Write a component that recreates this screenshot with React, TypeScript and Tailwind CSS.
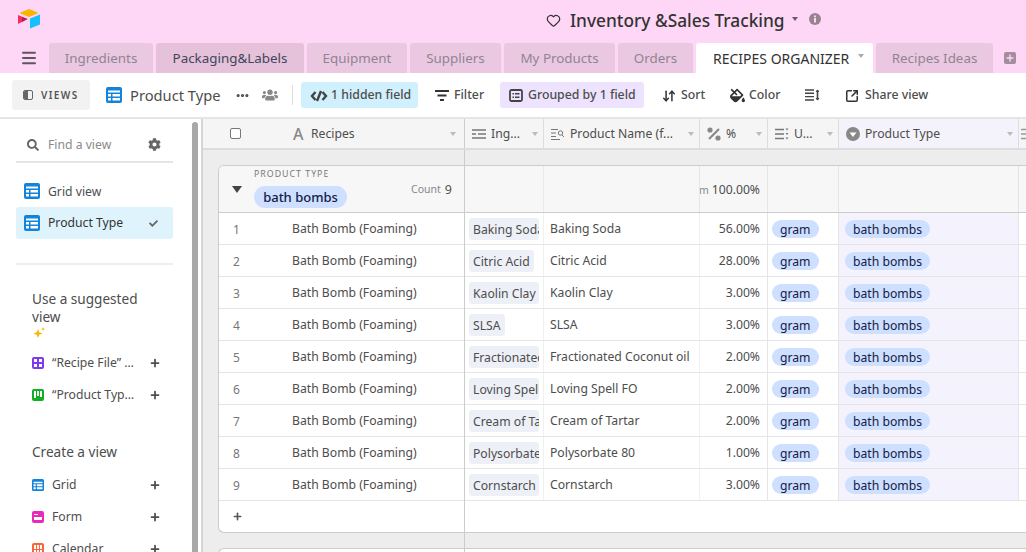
import { Ellipsis, Menu, Plus, ArrowDownUp, SquareArrowOutUpRight, Heart } from 'lucide-react';
import { FaCheck, FaCog, FaFillDrip, FaSearch, FaUsers } from 'react-icons/fa';

const font = "font-['Noto_Sans',sans-serif]";

const rows = [
   ['Baking Soda', 'Baking Soda', '56.00%'],
   ['Citric Acid', 'Citric Acid', '28.00%'],
   ['Kaolin Clay', 'Kaolin Clay', '3.00%'],
   ['SLSA', 'SLSA', '3.00%'],
   ['Fractionated Coconut oil', 'Fractionated Coconut oil', '2.00%'],
   ['Loving Spell FO', 'Loving Spell FO', '2.00%'],
   ['Cream of Tartar', 'Cream of Tartar', '2.00%'],
   ['Polysorbate 80', 'Polysorbate 80', '1.00%'],
   ['Cornstarch', 'Cornstarch', '3.00%'],
];

function Logo() {
   return (
      <svg width="24" height="22" viewBox="0 0 24 22">
         <path d="M12 1 L3.5 4.5 Q2.8 5 3.5 5.5 L12 9 L20.5 5.5 Q21.2 5 20.5 4.5 Z" fill="#fcb400" />
         <path d="M13 10.5 L23 6.5 V16.500 L13 20.500 Z" fill="#18bfff" />
         <path d="M1 7 L10.5 11 L1 16 Z" fill="#f82b60" />
         <path d="M5 9 L10.5 11 L5 14 Z" fill="#b5224f" />
      </svg>
   );
}

function TableIcon({ size = 16, color = '#1283da' }: { size?: number; color?: string }) {
   return (
      <svg width={size} height={size} viewBox="0 0 16 16" className="shrink-0">
         <rect width="16" height="16" rx="2" fill={color} />
         <path d="M2 3.500h12v2H2zM2 7h3v2.500H2zM6.500 7H14v2.500H6.500zM2 11h3v2.500H2zM6.500 11H14v2.500H6.500z" fill="#fff" />
      </svg>
   );
}

function Tab({ label, w, dark }: { label: string; w: string; dark?: boolean }) {
   return (
      <div className={`${w} flex h-[30px] items-center justify-center rounded-t-[3px] text-[13.4px] ${dark ? 'bg-[#e5c1da] text-[#41465a]' : 'bg-[#ebc8e1] text-[#8f8592]'}`}>
         {label}
      </div>
   );
}

function Header() {
   return (
      <div className="h-[73px] shrink-0 bg-[#fdd7f5]">
         <div className="relative h-[43px]">
            <div className="absolute left-[17px] top-[8px]"><Logo /></div>
            <div className="flex h-[41px] items-center pl-[546px]">
               <Heart size={15} strokeWidth={2} className="text-[#333]" />
               <span className="ml-[9px] text-[17.3px] font-medium text-[#333]">Inventory &amp;Sales Tracking</span>
               <span className="ml-[7px] mb-[4px] border-x-[3.5px] border-t-[4px] border-x-transparent border-t-[#665a63]" />
               <svg width="12" height="12" viewBox="0 0 12 12" className="ml-[11px] mb-[3px]">
                  <circle cx="6" cy="6" r="6" fill="#97848f" />
                  <rect x="5" y="5" width="2" height="4.500" fill="#fdd7f5" />
                  <rect x="5" y="2.500" width="2" height="1.700" fill="#fdd7f5" />
               </svg>
            </div>
         </div>
         <div className="flex h-[30px] items-end">
            <div className="flex h-[30px] w-[49px] items-center pl-[20px]">
               <Menu size={18} strokeWidth={2.6} className="text-[#5e5660]" />
            </div>
            <div className="flex gap-[3px]">
               <Tab label="Ingredients" w="w-[104px]" />
               <Tab label="Packaging&Labels" w="w-[148px]" dark />
               <Tab label="Equipment" w="w-[100px]" />
               <Tab label="Suppliers" w="w-[91px]" />
               <Tab label="My Products" w="w-[111px]" />
               <Tab label="Orders" w="w-[75px]" />
               <div className="flex h-[30px] w-[177px] items-center rounded-t-[3px] bg-white pl-[17px] text-[14px] text-[#333]">
                  <span>RECIPES ORGANIZER</span>
                  <span className="ml-[9px] mb-[4px] border-x-[3.5px] border-t-[4px] border-x-transparent border-t-[#aaa]" />
               </div>
               <Tab label="Recipes Ideas" w="w-[117px]" />
            </div>
            <div className="ml-[11px] flex h-[30px] items-center">
               <span className="flex h-[12px] w-[12px] items-center justify-center rounded-[2px] bg-[#a38c9d]">
                  <Plus size={10} strokeWidth={3.5} className="text-[#fdd7f5]" />
               </span>
            </div>
         </div>
      </div>
   );
}

function ToolBtn({ icon, label, className = '' }: { icon: React.ReactNode; label: string; className?: string }) {
   return (
      <div className={`flex h-[26px] shrink-0 items-center gap-[5px] whitespace-nowrap rounded-[3px] pt-[1px] text-[12.3px] font-medium text-[#4d4d4d] ${className}`}>
         {icon}
         <span>{label}</span>
      </div>
   );
}

function Toolbar() {
   return (
      <div className="flex h-[46px] shrink-0 items-center border-b-2 border-[#e5e5e5] bg-white pl-[12px]">
         <div className="flex h-[30px] w-[78px] items-center rounded-[3px] bg-[#f2f2f2] pl-[11px]">
            <span className="flex h-[10px] w-[10px] overflow-hidden rounded-[2px] border border-[#666]">
               <span className="w-[4px] bg-[#666]" />
            </span>
            <span className="ml-[8px] text-[10px] font-semibold tracking-[1.4px] text-[#555]">VIEWS</span>
         </div>
         <div className="ml-[16px]"><TableIcon /></div>
         <span className="ml-[8px] w-[90px] whitespace-nowrap text-[14.7px] text-[#4d4d4d]">Product Type</span>
         <Ellipsis size={15} strokeWidth={3} className="ml-[15px] text-[#444]" />
         <FaUsers size={16} className="ml-[12px] text-[#888]" />
         <span className="ml-[14px] h-[20px] w-px bg-[#ddd]" />
         <ToolBtn
            className="ml-[8px] w-[117px] bg-[#d0f0fd] pl-[9px] !gap-[3px]"
            icon={
               <svg width="18" height="12" viewBox="0 0 18 12">
                  <path d="M5.500 2 L2 6 L5.500 10 M12.500 2 L16 6 L12.500 10 M11 1 L7 11" fill="none" stroke="#444" strokeWidth="2.400" />
               </svg>
            }
            label="1 hidden field"
         />
         <ToolBtn
            className="ml-[17px] w-[49px]"
            icon={<svg width="14" height="11" viewBox="0 0 14 11" className="shrink-0"><path d="M0 1h14M2.500 5.500h9M5 10h4" stroke="#333" strokeWidth="2" /></svg>}
            label="Filter"
         />
         <ToolBtn
            className="ml-[16px] w-[144px] bg-[#ede3fe] pl-[9px]"
            icon={
               <svg width="14" height="13" viewBox="0 0 14 13" className="shrink-0">
                  <rect x="1" y="1" width="12" height="11" rx="1.500" fill="none" stroke="#444" strokeWidth="1.800" />
                  <path d="M3.500 4.800h1.500M6 4.800h4.500M3.500 8.200h1.500M6 8.200h4.500" stroke="#444" strokeWidth="1.500" />
               </svg>
            }
            label="Grouped by 1 field"
         />
         <ToolBtn className="ml-[18px] w-[43px]" icon={<ArrowDownUp size={14} strokeWidth={2.6} className="shrink-0 text-[#333]" />} label="Sort" />
         <ToolBtn className="ml-[25px] w-[50px] !gap-[4px]" icon={<FaFillDrip size={15} className="shrink-0 text-[#333]" />} label="Color" />
         <svg width="15" height="12" viewBox="0 0 15 12" className="ml-[25px] shrink-0">
            <path d="M0 1h9M0 4.300h9M0 7.600h9M0 11h9" stroke="#444" strokeWidth="1.400" />
            <path d="M12.500 1v10" stroke="#444" strokeWidth="1.600" />
            <path d="M10.500 3l2-2.500 2 2.500zM10.500 9l2 2.500 2-2.500z" fill="#444" />
         </svg>
         <ToolBtn className="ml-[25px] !gap-[6px]" icon={<SquareArrowOutUpRight size={14} strokeWidth={2.6} className="shrink-0 text-[#333]" />} label="Share view" />
      </div>
   );
}

function SuggestRow({ icon, label }: { icon: React.ReactNode; label: string }) {
   return (
      <div className="flex h-[32px] shrink-0 items-center pl-[32px] pr-[31px]">
         {icon}
         <span className="ml-[8px] mr-[9px] flex-1 truncate pt-[1px] text-[12.2px] text-[#4d4d4d]">{label}</span>
         <Plus size={12} strokeWidth={3.5} className="shrink-0 text-[#4d4d4d]" />
      </div>
   );
}

function Sidebar() {
   return (
      <div className="flex w-[192px] shrink-0 flex-col overflow-hidden bg-white">
         <div className="ml-[16px] mr-[19px] mt-[10px] flex h-[34px] shrink-0 items-center border-b-2 border-[#e5e5e5] pb-[1px] pl-[11px] pr-[12px]">
            <FaSearch size={12} className="text-[#666]" />
            <span className="ml-[9px] flex-1 pt-[1px] text-[12.2px] text-[#8a8a8a]">Find a view</span>
            <FaCog size={13} className="text-[#666]" />
         </div>
         <div className="ml-[16px] mr-[19px] mt-[12px] flex h-[32px] shrink-0 items-center pl-[8px]">
            <TableIcon />
            <span className="ml-[8px] pt-[2px] text-[12.2px] text-[#4d4d4d]">Grid view</span>
         </div>
         <div className="ml-[16px] mr-[19px] flex h-[32px] shrink-0 items-center rounded-[3px] bg-[#dff3fc] pl-[8px] pr-[15px]">
            <TableIcon />
            <span className="ml-[8px] flex-1 pt-[1px] text-[12.2px] text-[#333]">Product Type</span>
            <FaCheck size={9} className="text-[#666]" />
         </div>
         <div className="ml-[16px] mr-[19px] mt-[24px] h-[2px] shrink-0 bg-[#eeeeee]" />
         <div className="mt-[25px] w-[150px] shrink-0 pl-[32px] text-[13.6px] leading-[18px] text-[#4d4d4d]">
            Use a suggested view
         </div>
         <svg width="14" height="12" viewBox="0 0 14 12" className="ml-[32px] mt-[1px] shrink-0">
            <path d="M6 2 L7.200 5.300 L10.500 6.500 L7.200 7.700 L6 11 L4.800 7.700 L1.500 6.500 L4.800 5.300 Z" fill="#fcb400" />
            <path d="M11 0 L11.600 1.400 L13 2 L11.600 2.600 L11 4 L10.400 2.600 L9 2 L10.400 1.400 Z" fill="#fcb400" />
         </svg>
         <div className="mt-[8px] flex shrink-0 flex-col">
            <SuggestRow
               label="“Recipe File” view"
               icon={<span className="grid h-[12px] w-[12px] shrink-0 grid-cols-2 gap-[2px] rounded-[2px] bg-[#7c39ed] p-[2px]"><span className="bg-white" /><span className="bg-white" /><span className="bg-white" /><span className="bg-white" /></span>}
            />
            <SuggestRow
               label="“Product Type” view"
               icon={<span className="flex h-[12px] w-[12px] shrink-0 items-start justify-center gap-[1px] rounded-[2px] bg-[#11af22] pt-[2px]"><span className="h-[7px] w-[2px] bg-white" /><span className="h-[5px] w-[2px] bg-white" /><span className="h-[6px] w-[2px] bg-white" /></span>}
            />
         </div>
         <div className="mt-[32px] shrink-0 pl-[32px] text-[13.6px] leading-[18px] text-[#4d4d4d]">Create a view</div>
         <div className="mt-[8px] flex shrink-0 flex-col">
            <SuggestRow label="Grid" icon={<TableIcon size={12} />} />
            <SuggestRow
               label="Form"
               icon={<span className="flex h-[12px] w-[12px] shrink-0 flex-col justify-center gap-[2px] rounded-[2px] bg-[#e929ba] px-[2px]"><span className="h-[1px] w-[4px] bg-white" /><span className="h-[3px] bg-white" /></span>}
            />
            <SuggestRow
               label="Calendar"
               icon={<span className="grid h-[12px] w-[12px] shrink-0 grid-cols-3 gap-[1px] rounded-[2px] bg-[#f7653b] p-[2px]"><span className="bg-white" /><span className="bg-white" /><span className="bg-white" /><span className="bg-white" /><span className="bg-white" /><span className="bg-white" /></span>}
            />
         </div>
      </div>
   );
}

function Caret() {
   return <span className="shrink-0 border-x-[3.5px] border-t-[4px] border-x-transparent border-t-[#bbb]" />;
}

function HeadCell({ w, icon, label, className = 'bg-transparent' }: { w: string; icon: React.ReactNode; label: string; className?: string }) {
   return (
      <div className={`${w} flex h-full shrink-0 items-center border-r border-[#ddd] pl-[7px] pr-[5px] text-[12.2px] text-[#4d4d4d] ${className}`}>
         <span className="flex w-[14px] shrink-0 justify-center">{icon}</span>
         <span className="ml-[5px] flex-1 truncate pt-[2px]">{label}</span>
         <Caret />
      </div>
   );
}

function ColumnHeader() {
   return (
      <div className="flex h-[31px] shrink-0 border-b-2 border-[#ddd] bg-[#f5f5f5]">
         <div className="flex w-[262px] shrink-0 items-center border-r border-[#ccc] pr-[8px] text-[12.2px] text-[#4d4d4d]">
            <span className="ml-[27px] h-[11px] w-[11px] rounded-[2px] border border-[#777] bg-white" />
            <span className="ml-[52px] w-[15px] text-[16px] font-medium text-[#888]">A</span>
            <span className="ml-[3px] flex-1 pt-[2px]">Recipes</span>
            <Caret />
         </div>
         <HeadCell
            w="w-[79px]"
            label="Ing..."
            icon={<svg width="14" height="12" viewBox="0 0 14 12"><path d="M0 2h14M6 6h8M0 10h14M0 6h4" stroke="#777" strokeWidth="1.500" /></svg>}
         />
         <HeadCell
            w="w-[156px]"
            label="Product Name (f..."
            icon={<svg width="14" height="12" viewBox="0 0 14 12"><path d="M0 1.500h7M0 5h5M0 8.500h5M0 11.500h9" stroke="#777" strokeWidth="1.200" /><circle cx="9.500" cy="5" r="2.200" fill="none" stroke="#777" /><path d="M11 7l2 2" stroke="#777" /></svg>}
         />
         <HeadCell
            w="w-[68px]"
            label="%"
            icon={<svg width="14" height="14" viewBox="0 0 14 14"><circle cx="3" cy="3" r="2.600" fill="#888" /><circle cx="11" cy="11" r="2.600" fill="#888" /><path d="M12 2 L2 12" stroke="#888" strokeWidth="2.200" /></svg>}
         />
         <HeadCell
            w="w-[71px]"
            label="U..."
            icon={<svg width="14" height="12" viewBox="0 0 14 12"><path d="M0 1.500h9M0 6h9M0 10.500h9" stroke="#777" strokeWidth="1.500" /><path d="M10.500 0.500h3l-1.500 2zM10.500 5h3l-1.500 2zM10.500 9.500h3l-1.500 2z" fill="#777" /></svg>}
         />
         <HeadCell
            w="w-[180px]"
            className="bg-[#f4f2fb]"
            label="Product Type"
            icon={<svg width="14" height="14" viewBox="0 0 14 14"><circle cx="7" cy="7" r="7" fill="#888" /><path d="M3.500 5.500h7L7 10z" fill="#fff" /></svg>}
         />
         <div className="flex h-full flex-1 items-center pl-[2px]">
            <svg width="6" height="12" viewBox="0 0 6 12"><path d="M0 1.500h6M0 6h6M0 10.500h6" stroke="#999" strokeWidth="1.500" /></svg>
         </div>
      </div>
   );
}

function Pill({ label }: { label: string }) {
   return <span className="rounded-full bg-[#cfdfff] px-[8px] pt-[1px] text-[12.2px] leading-[17px] text-[#102046]">{label}</span>;
}

function LeftPane() {
   return (
      <div className="w-[262px] shrink-0 border-r border-[#ccc] bg-[#ededed] pt-[15px]">
         <div className="ml-[15px] overflow-hidden rounded-l-[6px] border border-r-0 border-[#ccc] bg-white">
            <div className="flex h-[47px] border-b border-[#ccc] bg-[#f7f7f7]">
               <div className="flex w-[35px] items-center justify-center">
                  <span className="ml-[1px] border-x-[5px] border-t-[7px] border-x-transparent border-t-[#444]" />
               </div>
               <div className="pt-[3px]">
                  <div className="text-[8.8px] leading-[11px] tracking-[1px] text-[#777]">PRODUCT TYPE</div>
                  <div className="mt-[6px] flex h-[22px] w-[93px] items-center justify-center rounded-full bg-[#cfdfff] pt-[1px] text-[13px] font-medium text-[#102046]">bath bombs</div>
               </div>
               <div className="ml-auto flex items-center pr-[12px] pt-[2px] text-[10.500px] text-[#888]">
                  Count <span className="ml-[4px] text-[12.500px] text-[#555]">9</span>
               </div>
            </div>
            {rows.map((r, i) => (
               <div key={i} className="flex h-[32px] items-center border-b border-[#e5e5e5] pt-[2px] text-[12.2px] text-[#4d4d4d]">
                  <span className="w-[73px] pl-[14px] text-[12px] text-[#777]">{i + 1}</span>
                  <span>Bath Bomb (Foaming)</span>
               </div>
            ))}
            <div className="flex h-[31px] items-center pl-[13px]">
               <Plus size={11} strokeWidth={3.5} className="text-[#555]" />
            </div>
         </div>
         <div className="ml-[15px] mt-[15px] h-[20px] rounded-tl-[6px] border-l border-t border-[#ccc] bg-white" />
      </div>
   );
}

function RightPane() {
   return (
      <div className="flex-1 bg-[#ededed] pt-[15px]">
         <div className="border-y border-[#ccc] bg-white">
            <div className="flex h-[47px] border-b border-[#ccc] bg-[#f7f7f7]">
               <div className="w-[79px] border-r border-[#eaeaea]" />
               <div className="w-[156px] border-r border-[#e5e5e5]" />
               <div className="flex w-[68px] items-center justify-end gap-[3px] overflow-hidden whitespace-nowrap border-r border-[#e5e5e5] pr-[7px] pt-[3px] text-[12.2px] text-[#4d4d4d]">
                  <span className="shrink-0 text-[10.500px] text-[#888]">Sum</span>
                  <span className="shrink-0">100.00%</span>
               </div>
               <div className="w-[71px] border-r border-[#e5e5e5]" />
               <div className="w-[180px] border-r border-[#e5e5e5]" />
            </div>
            {rows.map((r, i) => (
               <div key={i} className="flex h-[32px] border-b border-[#e5e5e5] text-[12.2px] text-[#4d4d4d]">
                  <div className="flex w-[79px] shrink-0 items-center overflow-hidden border-r border-[#f0f0f0] px-[4px]">
                     <span className="block max-w-full overflow-hidden whitespace-nowrap rounded-[3px] bg-[#eef0f8] px-[4px] pt-[1px] leading-[21px]">{r[0]}</span>
                  </div>
                  <div className="flex w-[156px] shrink-0 items-center whitespace-nowrap border-r border-[#f0f0f0] pl-[6px] pt-[2px]">{r[1]}</div>
                  <div className="flex w-[68px] shrink-0 items-center justify-end border-r border-[#e5e5e5] pr-[7px] pt-[2px]">{r[2]}</div>
                  <div className="flex w-[71px] shrink-0 items-center border-r border-[#e5e5e5] pl-[4px]"><Pill label="gram" /></div>
                  <div className="flex w-[180px] shrink-0 items-center border-r border-[#e5e5e5] bg-[#f4f2fd] pl-[6px]"><Pill label="bath bombs" /></div>
               </div>
            ))}
            <div className="h-[31px]" />
         </div>
         <div className="mt-[15px] h-[20px] border-t border-[#ccc] bg-white" />
      </div>
   );
}

function App() {
   return (
      <div className={`flex h-[552px] w-[1026px] flex-col overflow-hidden bg-white ${font}`}>
         <Header />
         <Toolbar />
         <div className="flex min-h-0 flex-1">
            <Sidebar />
            <div className="mt-[3px] w-[6px] shrink-0 rounded-t-[3px] bg-[#a8a8a8]" />
            <div className="w-[3px] shrink-0 bg-white" />
            <div className="w-[2px] shrink-0 bg-[#d5d5d5]" />
            <div className="flex min-w-0 flex-1 flex-col overflow-hidden">
               <ColumnHeader />
               <div className="flex min-h-0 flex-1">
                  <LeftPane />
                  <RightPane />
               </div>
            </div>
         </div>
      </div>
   );
}

export default App;
